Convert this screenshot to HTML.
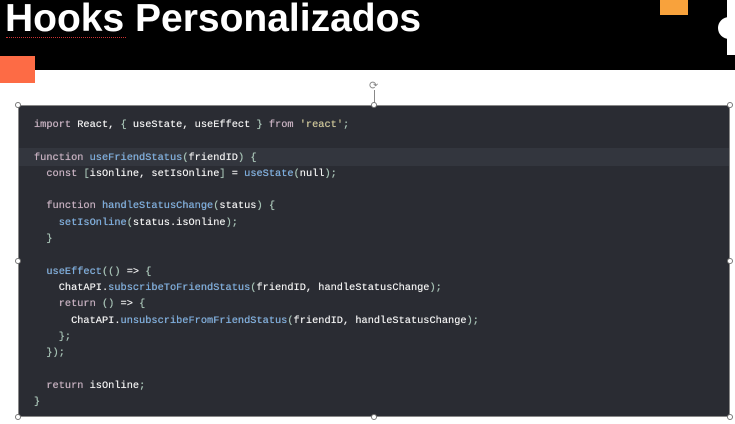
<!DOCTYPE html>
<html><head><meta charset="utf-8"><style>
body{margin:0;width:735px;height:424px;background:#fff;position:relative;overflow:hidden;font-family:"Liberation Sans",sans-serif}
.hdr{position:absolute;left:0;top:0;width:735px;height:70px;background:#000}
.title{position:absolute;left:5px;top:-3px;font-size:39px;font-weight:bold;color:#fff;letter-spacing:0px}
.box{position:absolute;left:18px;top:105px;width:712px;height:312px;background:#2a2c33;border:1px solid #888;box-sizing:border-box}
.hl{position:absolute;left:0;top:42px;width:100%;height:18px;background:#33363e}
pre{position:absolute;left:15px;top:11px;margin:0;font-family:"Liberation Mono",monospace;font-size:10.3px;line-height:16.3px;color:#f2f2f2;text-shadow:0 0 0.4px #f2f2f2}
.k{color:#c4a9bc}.f{color:#6fa8e0}.p{color:#9dbfae}.s{color:#c9c08a}
.h{position:absolute;width:6px;height:6px;border-radius:50%;background:#fff;border:1px solid #777;box-sizing:border-box}
</style></head><body>
<div class="hdr"></div>
<div class="title">Hooks Personalizados</div>
<div style="position:absolute;left:6px;top:37px;width:120px;border-bottom:1px dotted #c33"></div>
<div style="position:absolute;left:0;top:56px;width:35px;height:27px;background:#fd6b45"></div>
<div style="position:absolute;left:660px;top:0;width:28px;height:15px;background:#f8a23c"></div>
<div style="position:absolute;left:727px;top:0;width:8px;height:55px;background:#fff"></div>
<div style="position:absolute;left:718px;top:17px;width:22px;height:22px;border-radius:50%;background:#fff"></div>
<div style="position:absolute;left:374px;top:90px;width:1px;height:15px;background:#888"></div>
<div style="position:absolute;left:369px;top:79px;font-size:11px;color:#888">⟳</div>
<div class="box"><div class="hl"></div>
<pre><span class="k">import</span> React, <span class="p">{</span> useState, useEffect <span class="p">}</span> <span class="k">from</span> <span class="s">'react'</span><span class="p">;</span>

<span class="k">function</span> <span class="f">useFriendStatus</span><span class="p">(</span>friendID<span class="p">)</span> <span class="p">{</span>
  <span class="k">const</span> <span class="p">[</span>isOnline, setIsOnline<span class="p">]</span> = <span class="f">useState</span><span class="p">(</span>null<span class="p">);</span>

  <span class="k">function</span> <span class="f">handleStatusChange</span><span class="p">(</span>status<span class="p">)</span> <span class="p">{</span>
    <span class="f">setIsOnline</span><span class="p">(</span>status.isOnline<span class="p">);</span>
  <span class="p">}</span>

  <span class="f">useEffect</span><span class="p">(()</span> =&gt; <span class="p">{</span>
    ChatAPI.<span class="f">subscribeToFriendStatus</span><span class="p">(</span>friendID, handleStatusChange<span class="p">);</span>
    <span class="k">return</span> <span class="p">()</span> =&gt; <span class="p">{</span>
      ChatAPI.<span class="f">unsubscribeFromFriendStatus</span><span class="p">(</span>friendID, handleStatusChange<span class="p">);</span>
    <span class="p">};</span>
  <span class="p">});</span>

  <span class="k">return</span> isOnline<span class="p">;</span>
<span class="p">}</span></pre></div>
<div class="h" style="left:15px;top:102px"></div>
<div class="h" style="left:371px;top:102px"></div>
<div class="h" style="left:727px;top:102px"></div>
<div class="h" style="left:15px;top:258px"></div>
<div class="h" style="left:727px;top:258px"></div>
<div class="h" style="left:15px;top:414px"></div>
<div class="h" style="left:371px;top:414px"></div>
<div class="h" style="left:727px;top:414px"></div>
</body></html>
